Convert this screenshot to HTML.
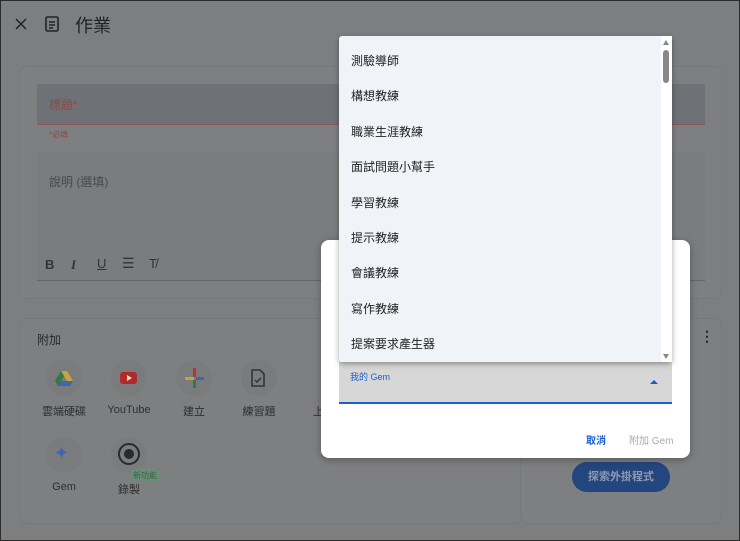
<!DOCTYPE html>
<html><head><meta charset="utf-8"><style>
*{margin:0;padding:0;box-sizing:border-box}
body{width:740px;height:541px;position:relative;overflow:hidden;background:#7d7e80;font-family:"Liberation Sans","Noto Sans CJK TC",sans-serif;color:#2b2b2b}
.a{position:absolute}
.card{position:absolute;border:1px solid #76787a;border-radius:8px;background:#7e7f81}
.lbl{font-size:11px;color:#2e2e2e;text-align:center;width:70px}
.ic{width:36px;height:36px;border-radius:50%;background:#7a7b7d}
.item{position:absolute;left:12px;font-size:12px;color:#222}
</style></head><body>
<div class="a" style="left:0;top:0;width:740px;height:541px;border:1px solid #2a2a2a"></div>
<svg class="a" style="left:15px;top:18px" width="12" height="12" viewBox="0 0 12 12"><path d="M1 1l10 10M11 1L1 11" stroke="#222" stroke-width="1.5"/></svg>
<svg class="a" style="left:44px;top:15px" width="16" height="18" viewBox="0 0 16 18"><rect x="2" y="2" width="12" height="14" rx="1.5" fill="none" stroke="#222" stroke-width="1.6"/><path d="M5 7h6M5 10h6M5 13h4" stroke="#222" stroke-width="1.4"/></svg>
<div class="a" style="left:75px;top:12px;font-size:18px;color:#222">作業</div>

<div class="card" style="left:19px;top:66px;width:703px;height:233px"></div>
<div class="a" style="left:37px;top:84px;width:668px;height:41px;background:#6f7177;border-bottom:1px solid #8a5555"></div>
<div class="a" style="left:49px;top:96px;font-size:12px;color:#8a4a4a">標題*</div>
<div class="a" style="left:49px;top:129px;font-size:8px;color:#8a4a4a">*必填</div>
<div class="a" style="left:37px;top:152px;width:668px;height:129px;background:#7b7c7e;border-bottom:1px solid #666"></div>
<div class="a" style="left:49px;top:173px;font-size:12px;color:#4a4a4a">說明 (選填)</div>
<div class="a" style="left:45px;top:257px;font-size:13px;color:#333;font-weight:bold">B</div>
<div class="a" style="left:71px;top:257px;font-size:13px;color:#333;font-style:italic;font-family:'Liberation Serif',serif;font-weight:bold">I</div>
<div class="a" style="left:97px;top:256px;font-size:13px;color:#333;text-decoration:underline">U</div>
<div class="a" style="left:122px;top:255px;font-size:14px;color:#333">☰</div>
<div class="a" style="left:149px;top:256px;font-size:13px;color:#333">T̸</div>

<div class="card" style="left:19px;top:318px;width:503px;height:206px"></div>
<div class="card" style="left:520px;top:318px;width:202px;height:206px"></div>
<div class="a" style="left:37px;top:331px;font-size:12px;color:#2a2a2a">附加</div>
<div class="a" style="left:700px;top:328px;font-size:14px;color:#222;font-weight:bold">⋮</div>

<div class="a ic" style="left:46px;top:360px"></div>
<svg class="a" style="left:55px;top:370px" width="18" height="16" viewBox="0 0 18 16"><path d="M6 1h6l6 10h-6z" fill="#c9a23a"/><path d="M6 1L0 11l3 5 6-10z" fill="#2f7a45"/><path d="M3 16h12l3-5H6z" fill="#3b68b0"/></svg>
<div class="a lbl" style="left:29px;top:403px">雲端硬碟</div>
<div class="a ic" style="left:111px;top:360px"></div>
<div class="a" style="left:120px;top:372px;width:17px;height:12px;background:#b02a2a;border-radius:3px"></div>
<div class="a" style="left:127px;top:375px;width:0;height:0;border-left:5px solid #ddd;border-top:3px solid transparent;border-bottom:3px solid transparent"></div>
<div class="a lbl" style="left:94px;top:404px">YouTube</div>
<div class="a ic" style="left:176px;top:360px"></div>
<div class="a" style="left:193px;top:368px;width:3px;height:9px;background:#b33"></div>
<div class="a" style="left:193px;top:380px;width:3px;height:8px;background:#2f7a45"></div>
<div class="a" style="left:185px;top:377px;width:9px;height:3px;background:#c9a23a"></div>
<div class="a" style="left:196px;top:377px;width:8px;height:3px;background:#3b68b0"></div>
<div class="a lbl" style="left:159px;top:403px">建立</div>
<div class="a ic" style="left:241px;top:360px"></div>
<svg class="a" style="left:251px;top:369px" width="14" height="18" viewBox="0 0 14 18"><path d="M1 1h8l4 4v12H1z" fill="none" stroke="#333" stroke-width="1.6"/><path d="M4 11l2 2 4-4" fill="none" stroke="#333" stroke-width="1.5"/></svg>
<div class="a lbl" style="left:224px;top:403px">練習題</div>
<div class="a" style="left:313px;top:403px;font-size:11px;color:#333">上</div>
<div class="a ic" style="left:46px;top:437px"></div>
<div class="a" style="left:54px;top:443px;font-size:18px;color:#3b68b0">✦</div>
<div class="a lbl" style="left:29px;top:481px">Gem</div>
<div class="a ic" style="left:111px;top:437px"></div>
<div class="a" style="left:118px;top:443px;width:22px;height:22px;border:2.5px solid #2a2a2a;border-radius:50%"></div>
<div class="a" style="left:124px;top:449px;width:10px;height:10px;background:#2a2a2a;border-radius:50%"></div>
<div class="a lbl" style="left:94px;top:481px">錄製</div>
<div class="a" style="left:129px;top:469px;font-size:8px;color:#2e6a40;background:#6e8a78;border-radius:6px;padding:1px 4px">新功能</div>

<div class="a" style="left:572px;top:462px;width:98px;height:30px;border-radius:15px;background:#24467e;color:#8f9bb0;font-size:11px;font-weight:bold;text-align:center;line-height:30px">探索外掛程式</div>

<div class="a" style="left:321px;top:240px;width:369px;height:218px;background:#fff;border-radius:8px;box-shadow:0 2px 8px rgba(0,0,0,.3)"></div>
<div class="a" style="left:339px;top:362px;width:333px;height:42px;background:#d6d7d6;border-bottom:2px solid #1a5fd0"></div>
<div class="a" style="left:350px;top:370px;font-size:9px;color:#1a5fd0">我的 Gem</div>
<div class="a" style="left:650px;top:380px;width:0;height:0;border-left:4px solid transparent;border-right:4px solid transparent;border-bottom:4px solid #1a5fd0"></div>
<div class="a" style="left:586px;top:432px;font-size:10px;color:#1a5fd0;font-weight:bold">取消</div>
<div class="a" style="left:629px;top:432px;font-size:10px;color:#aaa">附加 Gem</div>

<div class="a" style="left:339px;top:36px;width:333px;height:326px;background:#f0f3f8;border-radius:3px;box-shadow:0 2px 6px rgba(0,0,0,.35)">
<div class="a" style="right:0;top:0;width:11px;height:326px;background:#fff"></div>
<div class="a" style="left:324px;top:4px;width:0;height:0;border-left:3.5px solid transparent;border-right:3.5px solid transparent;border-bottom:5px solid #888"></div>
<div class="a" style="left:324px;top:14px;width:6px;height:33px;background:#888;border-radius:3px"></div>
<div class="a" style="left:324px;top:318px;width:0;height:0;border-left:3.5px solid transparent;border-right:3.5px solid transparent;border-top:5px solid #888"></div>
<div class="item" style="top:16px">測驗導師</div>
<div class="item" style="top:51px">構想教練</div>
<div class="item" style="top:87px">職業生涯教練</div>
<div class="item" style="top:122px">面試問題小幫手</div>
<div class="item" style="top:158px">學習教練</div>
<div class="item" style="top:193px">提示教練</div>
<div class="item" style="top:228px">會議教練</div>
<div class="item" style="top:264px">寫作教練</div>
<div class="item" style="top:299px">提案要求產生器</div>
</div>
</body></html>
